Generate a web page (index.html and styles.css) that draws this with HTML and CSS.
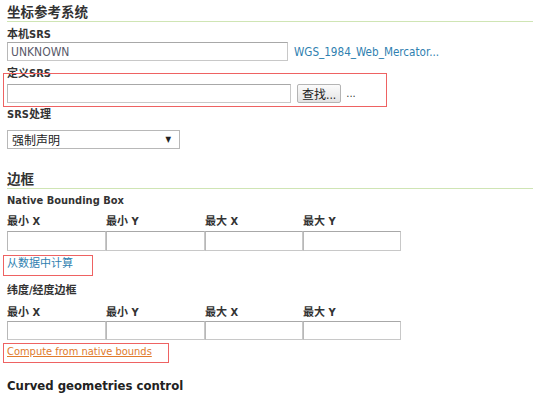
FILE: index.html
```html
<!DOCTYPE html>
<html lang="zh">
<head>
<meta charset="utf-8">
<link rel="stylesheet" href="styles.css">
</head>
<body>
<div class="page">
  <h2 class="section-title first">坐标参考系统</h2>
  <div class="field">
    <label class="lbl">本机SRS</label>
    <div class="row">
      <input class="txt wide" type="text" value="UNKNOWN">
      <a class="link wgs" href="#">WGS_1984_Web_Mercator...</a>
    </div>
  </div>
  <div class="field declared">
    <label class="lbl">定义SRS</label>
    <div class="row">
      <input class="txt wide2" type="text" value="">
      <button class="btn">查找...</button>
      <span class="dots">...</span>
    </div>
    <div class="mark mark-decl"></div>
  </div>
  <div class="field handling">
    <label class="lbl">SRS处理</label>
    <div class="select">
      <span>强制声明</span>
      <span class="arrow">▼</span>
    </div>
  </div>

  <h2 class="section-title second">边框</h2>
  <div class="sub">Native Bounding Box</div>
  <div class="bbox">
    <div class="cell"><div class="clbl">最小 X</div><input class="txt cin" type="text"></div>
    <div class="cell"><div class="clbl">最小 Y</div><input class="txt cin" type="text"></div>
    <div class="cell"><div class="clbl">最大 X</div><input class="txt cin" type="text"></div>
    <div class="cell"><div class="clbl">最大 Y</div><input class="txt cin" type="text"></div>
  </div>
  <div class="linkrow calc">
    <a class="link" href="#">从数据中计算</a>
    <div class="mark mark-calc"></div>
  </div>

  <div class="sub sub2">纬度/经度边框</div>
  <div class="bbox bbox2">
    <div class="cell"><div class="clbl">最小 X</div><input class="txt cin" type="text"></div>
    <div class="cell"><div class="clbl">最小 Y</div><input class="txt cin" type="text"></div>
    <div class="cell"><div class="clbl">最大 X</div><input class="txt cin" type="text"></div>
    <div class="cell"><div class="clbl">最大 Y</div><input class="txt cin" type="text"></div>
  </div>
  <div class="linkrow native">
    <a class="link orange" href="#">Compute from native bounds</a>
    <div class="mark mark-native"></div>
  </div>

  <h3 class="curved">Curved geometries control</h3>
</div>
</body>
</html>
```
FILE: styles.css
```css
html, body {
  margin: 0;
  padding: 0;
  background: #fff;
}
body {
  font-family: "DejaVu Sans Condensed", "DejaVu Sans", "Noto Sans CJK SC", sans-serif;
  font-size: 11px;
  color: #333;
}
.page {
  padding: 0 12px 0 7px;
  width: 526px;
}
.section-title {
  margin: 0;
  font-size: 13.5px;
  font-weight: bold;
  color: #333;
  border-bottom: 1px solid #cfe5b4;
  line-height: 17px;
}
.section-title.first {
  padding-top: 4px;
}
.section-title.second {
  margin-top: 22px;
}
.field {
  position: relative;
}
.lbl {
  display: block;
  font-weight: bold;
  font-size: 11px;
  line-height: 14px;
  margin-top: 6px;
  margin-bottom: 0;
}
.declared .lbl {
  margin-top: 6px;
  margin-bottom: 3px;
}
.handling .lbl {
  margin-top: 5px;
  margin-bottom: 8px;
}
.row {
  display: flex;
  align-items: center;
}
.txt {
  box-sizing: border-box;
  height: 19px;
  border: 1px solid #c8c8c8;
  border-top-color: #a8a8a8;
  border-left-color: #b8b8b8;
  font-family: inherit;
  font-size: 12px;
  color: #5a5a6a;
  padding: 0 3px;
  margin: 0;
  background: #fff;
}
.wide { width: 281px; }
.wide2 { width: 284px; }
.link {
  color: #2f7fb0;
  text-decoration: none;
  font-size: 11px;
}
.wgs {
  font-size: 11.6px;
  margin-left: 6px;
}
.btn {
  box-sizing: border-box;
  height: 19px;
  margin-left: 6px;
  padding: 0 4px;
  font-family: inherit;
  font-size: 12px;
  color: #222;
  border: 1px solid #b4b4b4;
  border-radius: 2px;
  background: linear-gradient(#fbfbfb, #e4e4e4);
}
.dots {
  margin-left: 5px;
  color: #333;
}
.mark {
  position: absolute;
  border: 1px solid #ee6262;
  pointer-events: none;
}
.mark-decl {
  left: -4px;
  top: 6px;
  width: 382px;
  height: 32px;
}
.select {
  box-sizing: border-box;
  width: 173px;
  height: 19px;
  border: 1px solid #b8b8b8;
  display: flex;
  align-items: center;
  justify-content: space-between;
  padding: 0 4px;
  font-size: 12px;
  color: #222;
}
.arrow {
  font-size: 8px;
  color: #222;
  margin-right: 4px;
}
.sub {
  font-weight: bold;
  font-size: 11px;
  line-height: 14px;
  margin-top: 5px;
}
.sub2 {
  margin-top: 13px;
}
.bbox {
  display: grid;
  grid-template-columns: 99px 99px 98px 98px;
  width: 394px;
}
.clbl {
  font-weight: bold;
  font-size: 11px;
  line-height: 14px;
  margin-top: 7px;
  margin-bottom: 2px;
}
.cin {
  width: 100%;
  height: 20px;
  display: block;
}
.bbox2 .clbl {
  margin-top: 8px;
  margin-bottom: 1px;
}
.bbox2 .cin {
  height: 19px;
}
.linkrow {
  position: relative;
  line-height: 14px;
}
.linkrow.calc {
  padding-top: 6px;
}
.linkrow.native {
  padding-top: 5px;
}
.mark-calc {
  left: -4px;
  top: 4px;
  width: 88px;
  height: 19px;
}
.mark-native {
  left: -4px;
  top: 3px;
  width: 164px;
  height: 18px;
}
.orange {
  color: #e07b2c;
  text-decoration: underline;
}
.curved {
  margin: 19px 0 0;
  font-size: 13px;
  font-weight: bold;
  color: #222;
  line-height: 16px;
}
```
